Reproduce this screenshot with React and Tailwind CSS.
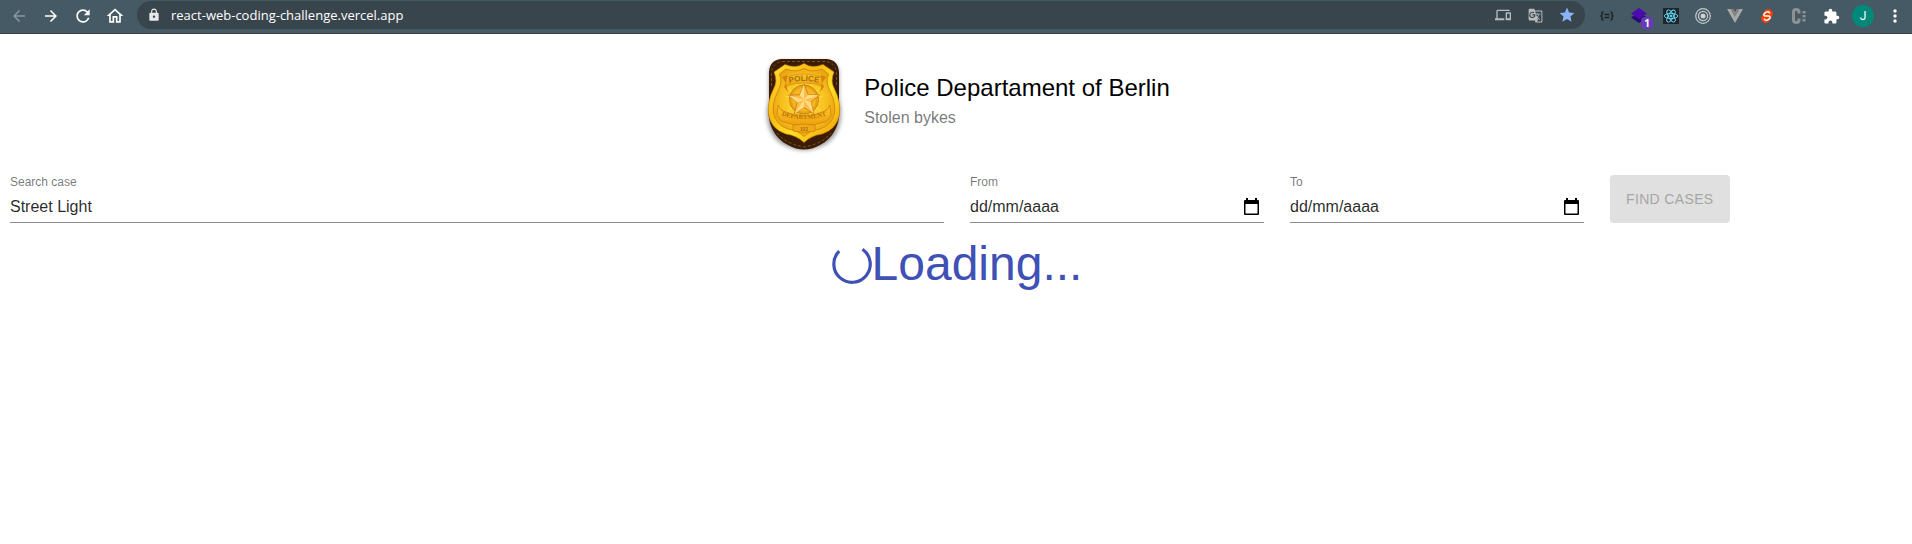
import { MdArrowBack, MdArrowForward, MdRefresh, MdOutlineHome, MdLock, MdDevices, MdGTranslate, MdStar, MdExtension, MdMoreVert } from 'react-icons/md';

function Badge() {
  return (
    <svg viewBox="0 0 110 120" className="h-[120px] w-[110px] shrink-0" role="img" aria-label="Police badge">
      <defs>
        <linearGradient id="rim" x1="0" y1="0" x2="1" y2="1">
          <stop offset="0" stopColor="#ffe13a" />
          <stop offset="0.35" stopColor="#f9b812" />
          <stop offset="0.6" stopColor="#ffe226" />
          <stop offset="0.85" stopColor="#f7b010" />
          <stop offset="1" stopColor="#ee9a04" />
        </linearGradient>
        <radialGradient id="face" cx="0.5" cy="0.48" r="0.6">
          <stop offset="0" stopColor="#ffe23e" />
          <stop offset="0.6" stopColor="#f8c01e" />
          <stop offset="1" stopColor="#e39a10" />
        </radialGradient>
        <linearGradient id="ribbon" x1="0" y1="0" x2="0" y2="1">
          <stop offset="0" stopColor="#ffc922" />
          <stop offset="1" stopColor="#eda010" />
        </linearGradient>
        <filter id="shade" x="-20%" y="-20%" width="140%" height="140%">
          <feGaussianBlur stdDeviation="2" />
        </filter>
        <path id="topArc" d="M36 43Q54 37 72 43" />
        <path id="lowArc" d="M30 74Q54 82 78 74" />
      </defs>
      <path d="M30 20H78Q88 21 89 33V58C95 82 86 98 74 104Q54 114 34 104C22 98 13 82 19 58V33Q20 21 30 20Z" fill="#555" opacity=".6" filter="url(#shade)" />
      <path d="M31 18H77Q88 19 89 31V62C92 84 82 98 70 104Q54 113 38 104C26 98 16 84 19 62V31Q20 19 31 18Z" fill="#3b1d06" />
      <path d="M32 20.500H76Q86 22 86.500 32V45M21.500 45V32Q22 22 32 20.500M27 92Q36 103 54 106Q72 103 81 92" fill="none" stroke="#8b5a2a" strokeWidth=".8" strokeDasharray="3 2" />
      <path d="M24 31L35 23.500Q46 28 54 22.500Q62 28 73 23.500L84 31Q80 40 84.500 48Q91 61 89.500 73Q87 88 72 93Q61 94.500 54 101.500Q47 94.500 36 93Q21 88 18.500 73Q17 61 23.500 48Q28 40 24 31Z" fill="url(#rim)" stroke="#c98206" strokeWidth=".6" />
      <path d="M29.500 33L36 28Q46 32 54 27.500Q62 32 72 28L78.500 33Q75 41 80 50Q86 62 84.500 72Q82 84 70 88Q60 89.500 54 95.500Q48 89.500 38 88Q26 84 23.500 72Q22 62 28 50Q33 41 29.500 33Z" fill="url(#face)" stroke="#d58e0c" strokeWidth="1" />
      <path d="M54 60L38 47M54 60L46 42M54 60V40M54 60L62 42M54 60L70 47M54 60L73 55M54 60L35 55M54 60L37 70M54 60L71 70" stroke="#ffee6e" strokeWidth="1" opacity=".5" />
      <path d="M32 36L37 34V47L38 51L34 46L36 42ZM76 36L71 34V47L70 51L74 46L72 42Z" fill="#d3860c" />
      <path d="M37 36Q54 30 71 36L73 45Q54 39 35 45Z" fill="url(#ribbon)" stroke="#cb8110" strokeWidth=".6" />
      <text fill="#a8700e" fontSize="8" fontWeight="700" fontFamily="Liberation Sans, sans-serif" textAnchor="middle"><textPath href="#topArc" startOffset="50%">POLICE</textPath></text>
      <circle cx="54" cy="58.500" r="14.500" fill="#eba516" stroke="#cc8310" strokeWidth="1" />
      <circle cx="54" cy="58.500" r="12" fill="#ffc928" opacity=".5" />
      <path d="M54 43L58.200 53.800L69.600 54.200L60.800 61.300L63.700 72.700L54 66.500L44.300 72.700L47.200 61.300L38.400 54.200L49.800 53.800Z" fill="#ffbd48" stroke="#b56d0c" strokeWidth=".7" />
      <path d="M54 43V59L49.800 53.800ZM69.600 54.200L54 59L58.200 53.800ZM63.700 72.700L54 59L60.800 61.300ZM44.300 72.700L54 59V66.500ZM38.400 54.200L54 59L47.200 61.300Z" fill="#ffe596" opacity=".8" />
      <path d="M28 64L31 69Q54 81 77 69L80 64L81 74L77 80Q54 89 31 80L27 74Z" fill="url(#ribbon)" stroke="#c67d0a" strokeWidth=".7" />
      <text fill="#b8720c" fontSize="6.500" fontWeight="700" fontFamily="Liberation Serif, serif" textAnchor="middle"><textPath href="#lowArc" startOffset="50%">DEPARTMENT</textPath></text>
      <path d="M43 84Q54 82 65 84V90Q54 93 43 90Z" fill="#f0aa18" stroke="#c67d0a" strokeWidth=".7" />
      <text x="54" y="89.500" fill="#9c600a" fontSize="5.500" fontWeight="700" fontFamily="Liberation Serif, serif" textAnchor="middle">112</text>
    </svg>
  );
}

function ToolButton({ label, children }) {
  return (
    <button type="button" aria-label={label} className="relative flex h-8 w-8 shrink-0 items-center justify-center">
      {children}
    </button>
  );
}

function BrowserBar() {
  return (
    <header className="flex h-[34px] items-start border-b border-[#39404d] bg-[#455a64] pl-[3px] pr-px text-white">
      <ToolButton label="Back"><MdArrowBack className="size-[18px] text-[#8b979d]" /></ToolButton>
      <ToolButton label="Forward"><MdArrowForward className="size-[18px]" /></ToolButton>
      <ToolButton label="Reload"><MdRefresh className="size-5" /></ToolButton>
      <ToolButton label="Home"><MdOutlineHome className="size-5" /></ToolButton>
      <div className="ml-1.5 mt-px flex h-7 min-w-0 flex-1 items-center rounded-full bg-[#38454c] pl-2.5 pr-0.5">
        <MdLock className="size-[14px] shrink-0 text-[#e6e8e9]" />
        <input aria-label="Address" defaultValue="react-web-coding-challenge.vercel.app" className="ml-2.5 min-w-0 flex-1 bg-transparent pt-0.5 font-['Open_Sans',sans-serif] text-[13px] outline-none" />
        <ToolButton label="Send to your devices"><MdDevices className="size-4 text-[#b7bcbf]" /></ToolButton>
        <ToolButton label="Translate this page"><MdGTranslate className="size-[15px] text-[#b7bcbf]" /></ToolButton>
        <ToolButton label="Edit bookmark"><MdStar className="size-[18px] text-[#8ab4f8]" /></ToolButton>
      </div>
      <div className="ml-1.5 flex shrink-0">
        <ToolButton label="JSON viewer">
          <svg viewBox="0 0 16 16" className="size-4" fill="none" stroke="#1b2429" strokeWidth="1.500">
            <path d="M4.500 4H3.800Q3 4 3 5V7L2 8L3 9V11Q3 12 3.800 12H4.500M11.500 4H12.200Q13 4 13 5V7L14 8L13 9V11Q13 12 12.200 12H11.500M5.500 6.500H10.500M5.500 9.500H10.500" />
          </svg>
        </ToolButton>
        <ToolButton label="Layers">
          <svg viewBox="0 0 16 16" className="size-4">
            <path d="M8 4L16 9.500L8 15L0 9.500Z" fill="#2b0a75" />
            <path d="M8 0L16 5.500L8 11L0 5.500Z" fill="#4b0bb0" />
          </svg>
          <span className="absolute bottom-[3px] right-[2px] flex size-3 items-center justify-center rounded-sm bg-[#673ab7] font-['Open_Sans',sans-serif] text-[10px] font-bold leading-none">1</span>
        </ToolButton>
        <ToolButton label="React Developer Tools">
          <svg viewBox="0 0 16 16" className="size-4 bg-[#20232a]" fill="none" stroke="#61dafb" strokeWidth=".9">
            <ellipse cx="8" cy="8" rx="6.800" ry="2.600" />
            <ellipse cx="8" cy="8" rx="6.800" ry="2.600" transform="rotate(60 8 8)" />
            <ellipse cx="8" cy="8" rx="6.800" ry="2.600" transform="rotate(120 8 8)" />
            <circle cx="8" cy="8" r="1" fill="#61dafb" />
          </svg>
        </ToolButton>
        <ToolButton label="Page inspector">
          <svg viewBox="0 0 16 16" className="size-4" fill="none" stroke="#c3c9cc" strokeWidth="1.200">
            <circle cx="8" cy="8" r="7.300" />
            <circle cx="8" cy="8" r="4.600" />
            <circle cx="8" cy="8" r="2" fill="#d5d9db" />
          </svg>
        </ToolButton>
        <ToolButton label="Vue Developer Tools">
          <svg viewBox="0 0 16 16" className="size-4">
            <path d="M0 1H6L8 4.500L10 1H16L8 15Z" fill="#a9a9a9" />
            <path d="M3.500 1H6L8 4.500L10 1H12.500L8 9Z" fill="#7e8285" />
          </svg>
        </ToolButton>
        <ToolButton label="Svelte Developer Tools">
          <svg viewBox="0 0 16 16" className="size-4">
            <rect x="3.500" y=".8" width="9" height="14.400" rx="4.500" transform="rotate(28 8 8)" fill="#ff3e00" />
            <path d="M10.800 5.400C10.300 3.500 8.300 3.300 7.100 4.200L5.500 5.300C4.300 6.200 4.700 8.300 6.600 8.100L9.400 7.900C11.300 7.700 11.700 9.800 10.500 10.700L8.900 11.800C7.700 12.700 5.700 12.500 5.200 10.600" fill="none" stroke="white" strokeWidth="1.500" />
          </svg>
        </ToolButton>
        <ToolButton label="Console helper">
          <svg viewBox="0 0 16 16" className="size-4" fill="none" stroke="#8d9193" strokeWidth="3">
            <path d="M8 5.500V4Q8 1.500 5.500 1.500H5Q2.500 1.500 2.500 4V12Q2.500 14.500 5 14.500H5.500Q8 14.500 8 12V10.500" />
            <path d="M13 3V5.500M13 7V9.500M13 11V13.500" />
          </svg>
        </ToolButton>
        <ToolButton label="Extensions"><MdExtension className="size-[17px]" /></ToolButton>
        <ToolButton label="Profile">
          <span className="flex size-[22px] items-center justify-center rounded-full bg-[#00897b] font-[Roboto,sans-serif] text-[12px]">J</span>
        </ToolButton>
        <ToolButton label="Menu"><MdMoreVert className="size-5" /></ToolButton>
      </div>
    </header>
  );
}

function Field({ id, label, className, children, ...input }) {
  return (
    <div className={className}>
      <label htmlFor={id} className="block text-xs leading-[14px] text-black/55">{label}</label>
      <div className="flex h-[34px] items-center border-b border-black/45 pt-0.5">
        <input id={id} type="text" className="min-w-0 flex-1 bg-transparent text-base leading-5 text-black/85 outline-none placeholder:text-black/85" {...input} />
        {children}
      </div>
    </div>
  );
}

function CalendarButton({ label }) {
  return (
    <button type="button" aria-label={label} className="mr-1 shrink-0">
      <svg viewBox="0 0 17 18" className="h-[18px] w-[17px]">
        <path d="M3 0H5V2H12V0H14V2H15Q16 2 16 3V16Q16 17 15 17H2Q1 17 1 16V3Q1 2 2 2H3ZM2.500 6V15.500H14.500V6Z" fill="black" fillRule="evenodd" />
      </svg>
    </button>
  );
}

export default function App() {
  return (
    <div className="min-h-screen bg-white font-['Liberation_Sans',Arial,sans-serif]">
      <BrowserBar />
      <main className="pt-[7px]">
        <div className="flex items-center justify-center gap-1 pl-2">
          <Badge />
          <div className="flex flex-col gap-0.5">
            <h1 className="text-2xl leading-8 text-black">Police Departament of Berlin</h1>
            <p className="text-base leading-6 text-black/55">Stolen bykes</p>
          </div>
        </div>
        <form className="mt-[14px] grid grid-cols-12 gap-[26px] pl-[10px] pr-2">
          <Field id="case" label="Search case" className="col-span-6" defaultValue="Street Light" />
          <Field id="from" label="From" className="col-span-2" placeholder="dd/mm/aaaa"><CalendarButton label="Choose start date" /></Field>
          <Field id="to" label="To" className="col-span-2" placeholder="dd/mm/aaaa"><CalendarButton label="Choose end date" /></Field>
          <button type="submit" disabled className="col-span-2 h-12 justify-self-start rounded bg-[#e0e0e0] px-4 text-sm tracking-wide text-[#a6a6a6]">FIND CASES</button>
        </form>
        <div role="status" className="mt-[13px] flex items-center justify-center pl-0.5 text-[#3f51b5]">
          <svg viewBox="0 0 40 40" className="size-10" fill="none" stroke="currentColor" strokeWidth="3.200">
            <path d="M7.200 7.200A18.200 18.200 0 1 0 30.500 5.200" />
          </svg>
          <span className="text-5xl leading-[56px]">Loading...</span>
        </div>
      </main>
    </div>
  );
}
